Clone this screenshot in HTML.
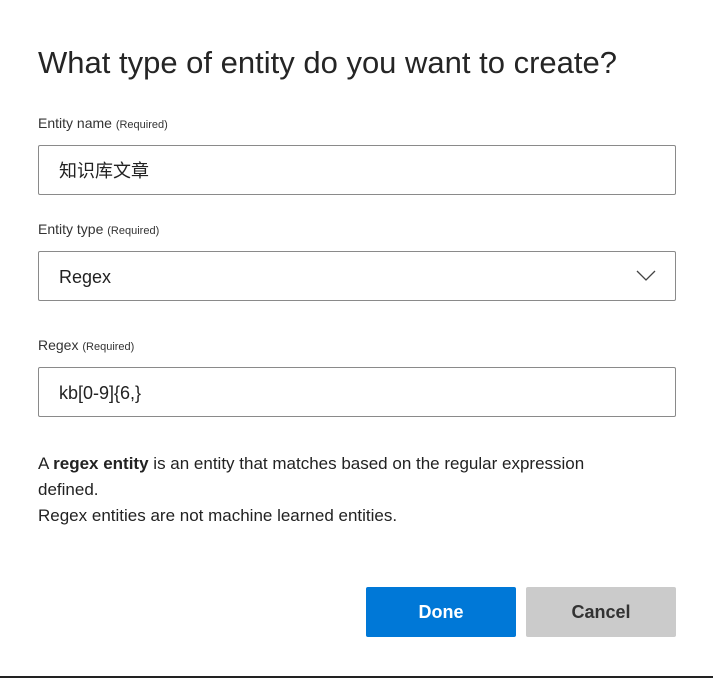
<!DOCTYPE html><html><head><style>
body{margin:0;width:713px;height:679px;background:#fff;font-family:"Liberation Sans","Noto Sans CJK SC",sans-serif;color:#222;position:relative;overflow:hidden}
.a{position:absolute}
h1{position:absolute;left:38px;top:45px;margin:0;font-weight:normal;font-size:31px;color:#252525;white-space:nowrap}
.l{position:absolute;left:38px;font-size:14px;color:#333}
.l small{font-size:11px}
.in{position:absolute;left:38px;height:48px;border:1px solid #8a8a8a;border-radius:2px;font-size:18px;line-height:50px;padding-left:20px;box-sizing:content-box;width:616px;color:#222}
.p{position:absolute;left:38px;font-size:17px;line-height:26px;color:#222;width:600px}
.btn{position:absolute;top:587px;width:150px;height:50px;border-radius:2px;font-weight:bold;font-size:18px;text-align:center;line-height:50px}
</style></head><body>
<h1>What type of entity do you want to create?</h1>
<div class="l" style="top:115px">Entity name <small>(Required)</small></div>
<div class="in" style="top:145px">知识库文章</div>
<div class="l" style="top:221px">Entity type <small>(Required)</small></div>
<div class="in" style="top:251px">Regex</div>
<svg class="a" style="left:636px;top:270px" width="20" height="12"><path d="M1 1 L10 10 L19 1" fill="none" stroke="#444" stroke-width="1.3"/></svg>
<div class="l" style="top:337px">Regex <small>(Required)</small></div>
<div class="in" style="top:367px">kb[0-9]{6,}</div>
<div class="p" style="top:451px">A <b>regex entity</b> is an entity that matches based on the regular expression defined.<br>Regex entities are not machine learned entities.</div>
<div class="btn" style="left:366px;background:#0078d7;color:#fff">Done</div>
<div class="btn" style="left:526px;background:#cbcbcb;color:#333">Cancel</div>
<div class="a" style="left:0;top:676px;width:713px;height:2px;background:#222"></div>
</body></html>
